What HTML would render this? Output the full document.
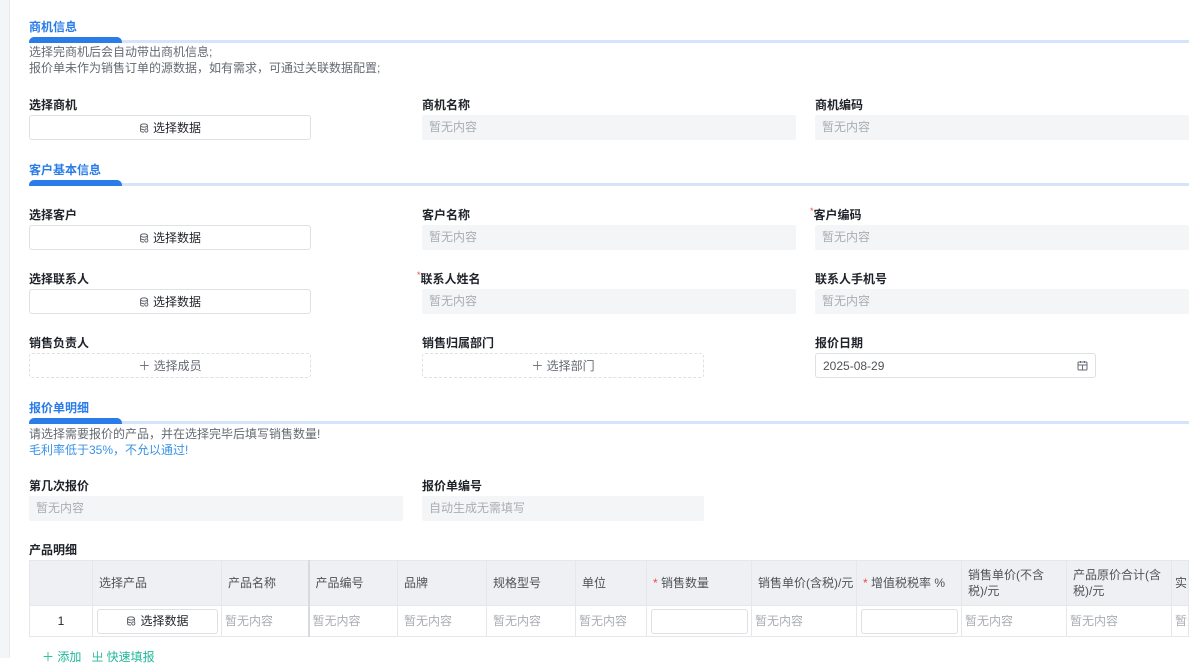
<!DOCTYPE html>
<html><head><meta charset="utf-8"><style>
*{box-sizing:border-box;margin:0;padding:0}
body{width:1200px;height:658px;overflow:hidden;background:#fff;font-family:"Liberation Sans","Noto Sans CJK SC",sans-serif;font-size:12px;color:#1f2329;position:relative}
.strip{position:absolute;left:0;top:0;width:10px;height:658px;background:#f4f5f7;border-right:1px solid #e8e9eb}
.a{position:absolute}
.sec{position:absolute;left:29px;color:#2a7ce8;font-weight:bold;font-size:12px}
.line{position:absolute;left:29px;width:1160px;height:3px;background:#d5e3fb}
.bar{position:absolute;left:29px;width:93px;height:6px;background:#2a7ce8;border-radius:5px 5px 0 0}
.desc{position:absolute;left:29px;color:#646a73;font-size:12px;line-height:16px}
.lab{position:absolute;font-weight:bold;font-size:12px;color:#1f2329}
.req{color:#f54a45;font-weight:normal;font-size:9px;vertical-align:top}
.btn{position:absolute;height:25px;border:1px solid #dee0e3;border-radius:3px;display:flex;align-items:center;justify-content:center;color:#1f2329}
.dash{border-style:dashed;color:#646a73}
.dis{position:absolute;height:25px;background:#f4f5f7;border-radius:2px;color:#a9adb3;padding-left:7px;line-height:25px}
.ic{display:inline-block;width:10px;height:10px;margin-right:4px}
table{position:absolute;left:29px;top:560px;width:1159px;border-collapse:collapse;table-layout:fixed}
td,th{border:1px solid #e6e7ea;font-weight:normal;text-align:left;padding:0 6px;color:#4e5359;font-size:12px;line-height:16px;overflow:hidden;white-space:nowrap}
th{background:#eff0f3;height:45px}
td{height:31px;color:#a9adb3;background:#fff}
.inp{width:97px;height:25px;border:1px solid #dee0e3;border-radius:3px}
</style></head><body>
<div class="strip"></div>

<div class="sec" style="top:18px">商机信息</div>
<div class="line" style="top:40px"></div><div class="bar" style="top:37px"></div>
<div class="desc" style="top:44px">选择完商机后会自动带出商机信息;<br>报价单未作为销售订单的源数据，如有需求，可通过关联数据配置;</div>

<div class="lab" style="left:29px;top:96px">选择商机</div>
<div class="btn" style="left:29px;top:115px;width:282px"><svg class="ic" viewBox="0 0 10 10"><ellipse cx="5" cy="2.5" rx="3.5" ry="1.6" fill="none" stroke="#646a73"/><path d="M1.5 2.5v5c0 1 1.5 1.6 3.5 1.6M8.5 2.5v3M1.5 5c0 1 1.5 1.6 3.5 1.6" fill="none" stroke="#646a73"/><circle cx="7.3" cy="7.5" r="1.6" fill="none" stroke="#646a73"/></svg>选择数据</div>
<div class="lab" style="left:422px;top:96px">商机名称</div>
<div class="dis" style="left:422px;top:115px;width:374px">暂无内容</div>
<div class="lab" style="left:815px;top:96px">商机编码</div>
<div class="dis" style="left:815px;top:115px;width:374px">暂无内容</div>

<div class="sec" style="top:161px">客户基本信息</div>
<div class="line" style="top:183px"></div><div class="bar" style="top:180px"></div>

<div class="lab" style="left:29px;top:206px">选择客户</div>
<div class="btn" style="left:29px;top:225px;width:282px"><svg class="ic" viewBox="0 0 10 10"><ellipse cx="5" cy="2.5" rx="3.5" ry="1.6" fill="none" stroke="#646a73"/><path d="M1.5 2.5v5c0 1 1.5 1.6 3.5 1.6M8.5 2.5v3M1.5 5c0 1 1.5 1.6 3.5 1.6" fill="none" stroke="#646a73"/><circle cx="7.3" cy="7.5" r="1.6" fill="none" stroke="#646a73"/></svg>选择数据</div>
<div class="lab" style="left:422px;top:206px">客户名称</div>
<div class="dis" style="left:422px;top:225px;width:374px">暂无内容</div>
<div class="lab" style="left:810px;top:206px"><span class="req">*</span>客户编码</div>
<div class="dis" style="left:815px;top:225px;width:374px">暂无内容</div>

<div class="lab" style="left:29px;top:270px">选择联系人</div>
<div class="btn" style="left:29px;top:289px;width:282px"><svg class="ic" viewBox="0 0 10 10"><ellipse cx="5" cy="2.5" rx="3.5" ry="1.6" fill="none" stroke="#646a73"/><path d="M1.5 2.5v5c0 1 1.5 1.6 3.5 1.6M8.5 2.5v3M1.5 5c0 1 1.5 1.6 3.5 1.6" fill="none" stroke="#646a73"/><circle cx="7.3" cy="7.5" r="1.6" fill="none" stroke="#646a73"/></svg>选择数据</div>
<div class="lab" style="left:417px;top:270px"><span class="req">*</span>联系人姓名</div>
<div class="dis" style="left:422px;top:289px;width:374px">暂无内容</div>
<div class="lab" style="left:815px;top:270px">联系人手机号</div>
<div class="dis" style="left:815px;top:289px;width:374px">暂无内容</div>

<div class="lab" style="left:29px;top:334px">销售负责人</div>
<div class="btn dash" style="left:29px;top:353px;width:282px">＋ 选择成员</div>
<div class="lab" style="left:422px;top:334px">销售归属部门</div>
<div class="btn dash" style="left:422px;top:353px;width:282px">＋ 选择部门</div>
<div class="lab" style="left:815px;top:334px">报价日期</div>
<div class="btn" style="left:815px;top:353px;width:281px;justify-content:space-between;padding:0 7px;color:#4e5359">2025-08-29<svg width="11" height="11" viewBox="0 0 11 11"><rect x="1" y="2" width="9" height="8" rx="1" fill="none" stroke="#646a73"/><path d="M1 5h9M3.5 1v2M7.5 1v2M5.5 5v5" stroke="#646a73"/></svg></div>

<div class="sec" style="top:399px">报价单明细</div>
<div class="line" style="top:421px"></div><div class="bar" style="top:418px"></div>
<div class="desc" style="top:426px">请选择需要报价的产品，并在选择完毕后填写销售数量!<br><span style="color:#3a93e6">毛利率低于35%，不允以通过!</span></div>

<div class="lab" style="left:29px;top:477px">第几次报价</div>
<div class="dis" style="left:29px;top:496px;width:374px">暂无内容</div>
<div class="lab" style="left:422px;top:477px">报价单编号</div>
<div class="dis" style="left:422px;top:496px;width:282px">自动生成无需填写</div>

<div class="lab" style="left:29px;top:541px">产品明细</div>
<table>
<colgroup><col style="width:63px"><col style="width:129px"><col style="width:87px"><col style="width:89px"><col style="width:89px"><col style="width:89px"><col style="width:71px"><col style="width:105px"><col style="width:105px"><col style="width:105px"><col style="width:105px"><col style="width:105px"><col style="width:17px"></colgroup>
<tr><th></th><th>选择产品</th><th>产品名称</th><th style="border-left:2px solid #d9dadd">产品编号</th><th>品牌</th><th>规格型号</th><th>单位</th><th><span style="color:#f54a45">*</span> 销售数量</th><th>销售单价(含税)/元</th><th><span style="color:#f54a45">*</span> 增值税税率 %</th><th style="white-space:normal">销售单价(不含税)/元</th><th style="white-space:normal">产品原价合计(含税)/元</th><th style="padding:0 3px">实际</th></tr>
<tr><td style="text-align:center;color:#1f2329">1</td><td style="padding:0 4px"><div class="btn" style="position:static;width:121px;height:25px"><svg class="ic" viewBox="0 0 10 10"><ellipse cx="5" cy="2.5" rx="3.5" ry="1.6" fill="none" stroke="#646a73"/><path d="M1.5 2.5v5c0 1 1.5 1.6 3.5 1.6M8.5 2.5v3M1.5 5c0 1 1.5 1.6 3.5 1.6" fill="none" stroke="#646a73"/><circle cx="7.3" cy="7.5" r="1.6" fill="none" stroke="#646a73"/></svg>选择数据</div></td><td style="padding:0 3px">暂无内容</td><td style="border-left:2px solid #d9dadd;padding:0 3px">暂无内容</td><td>暂无内容</td><td>暂无内容</td><td style="padding:0 3px">暂无内容</td><td style="padding:0 4px"><div class="inp"></div></td><td style="padding:0 3px">暂无内容</td><td style="padding:0 4px"><div class="inp"></div></td><td style="padding:0 3px">暂无内容</td><td style="padding:0 3px">暂无内容</td><td style="padding:0 3px">暂无</td></tr>
</table>
<div class="a" style="left:42px;top:648px;color:#1fb89a;font-size:12px">＋ 添加 &nbsp;&nbsp;<span>㞢 快速填报</span></div>
</body></html>
